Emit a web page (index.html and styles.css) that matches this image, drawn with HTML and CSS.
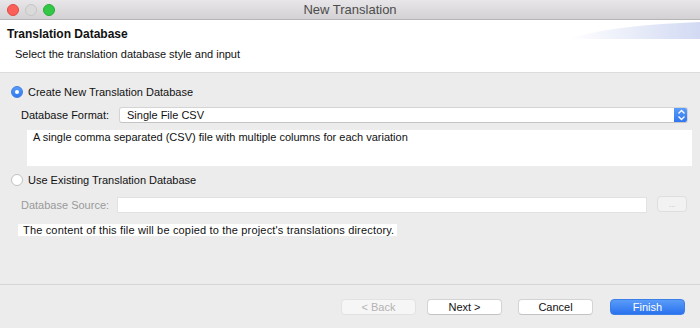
FILE: index.html
```html
<!DOCTYPE html>
<html>
<head>
<meta charset="utf-8">
<title>New Translation</title>
<link rel="stylesheet" href="styles.css">
</head>
<body>
<div class="window">
  <div class="titlebar">
    <div class="lights">
      <span class="light red"></span>
      <span class="light gray"></span>
      <span class="light green"></span>
    </div>
    <div class="wintitle">New Translation</div>
  </div>
  <div class="header">
    <svg class="swoosh" width="132" height="19" viewBox="0 0 132 19">
      <defs>
        <linearGradient id="sw" x1="0" y1="0" x2="1" y2="0">
          <stop offset="0" stop-color="#ffffff"/>
          <stop offset="1" stop-color="#d2daf3"/>
        </linearGradient>
      </defs>
      <path d="M0 18 C 30 8, 80 3, 132 1 L132 18 Z" fill="url(#sw)"/>
    </svg>
    <div class="htitle">Translation Database</div>
    <div class="hsub">Select the translation database style and input</div>
  </div>
  <div class="content">
    <div class="radio-row">
      <span class="radio checked"></span>
      <span>Create New Translation Database</span>
    </div>
    <div class="field-row format-row">
      <span class="flabel flabel-format">Database Format:</span>
      <div class="select">
        <span class="select-text">Single File CSV</span>
        <span class="stepper">
          <svg width="9" height="12" viewBox="0 0 9 12">
            <path d="M1.5 4.5 L4.5 1.5 L7.5 4.5 M1.5 7.5 L4.5 10.5 L7.5 7.5" fill="none" stroke="#fff" stroke-width="1.3"/>
          </svg>
        </span>
      </div>
    </div>
    <div class="desc">A single comma separated (CSV) file with multiple columns for each variation</div>
    <div class="radio-row radio-row2">
      <span class="radio"></span>
      <span>Use Existing Translation Database</span>
    </div>
    <div class="field-row source-row">
      <span class="flabel flabel-source disabled">Database Source:</span>
      <div class="input"></div>
      <div class="browse">...</div>
    </div>
    <div class="info-wrap"><span class="info">The content of this file will be copied to the project's translations directory.</span></div>
  </div>
  <div class="footer">
    <div class="btn btn-disabled">&lt; Back</div>
    <div class="btn btn-next">Next &gt;</div>
    <div class="btn btn-cancel">Cancel</div>
    <div class="btn btn-primary">Finish</div>
  </div>
</div>
</body>
</html>
```
FILE: styles.css
```css
* { box-sizing: border-box; }
html, body { margin: 0; padding: 0; }
body {
  font-family: "Liberation Sans", Arial, sans-serif;
  font-size: 11px;
  color: #111111;
  background: #ececec;
}
.window {
  width: 700px;
  height: 328px;
  display: flex;
  flex-direction: column;
  background: #ececec;
  overflow: hidden;
}
.titlebar {
  height: 20px;
  flex: none;
  display: flex;
  align-items: center;
  justify-content: center;
  position: relative;
  background: linear-gradient(#e8e6e8, #d3d1d3);
  border-bottom: 1px solid #b5b5b5;
}
.lights {
  position: absolute;
  left: 7px;
  top: 4px;
  display: flex;
  gap: 6px;
}
.light {
  width: 12px;
  height: 12px;
  border-radius: 50%;
  display: block;
}
.red { background: #fc5f57; border: 0.5px solid #de4a43; }
.gray { background: #dadada; border: 0.5px solid #c6c6c6; }
.green { background: #33c748; border: 0.5px solid #27aa35; }
.wintitle {
  font-size: 13px;
  color: #4c4c4c;
  line-height: 16px;
}
.header {
  height: 53px;
  flex: none;
  background: #ffffff;
  border-bottom: 1px solid #dcdcdc;
  padding: 7px 7px 0 7px;
  position: relative;
}
.swoosh {
  position: absolute;
  right: 0;
  top: 1px;
}
.htitle {
  font-weight: bold;
  font-size: 12px;
  line-height: 14px;
  color: #111111;
}
.hsub {
  margin-top: 6px;
  margin-left: 8px;
  line-height: 14px;
}
.content {
  flex: 1;
  padding: 11px 0 0 11px;
  display: flex;
  flex-direction: column;
}
.radio-row {
  display: flex;
  align-items: center;
  gap: 5px;
  height: 16px;
  line-height: 16px;
}
.radio {
  width: 12px;
  height: 12px;
  border-radius: 50%;
  background: #ffffff;
  border: 1px solid #c2c2c2;
  display: flex;
  align-items: center;
  justify-content: center;
  flex: none;
}
.radio.checked {
  background: linear-gradient(#5a9cf8, #2d79f2);
  border-color: #3b7fe6;
}
.radio.checked::after {
  content: "";
  width: 4px;
  height: 4px;
  border-radius: 50%;
  background: #ffffff;
}
.field-row {
  display: flex;
  align-items: center;
  padding-left: 10px;
}
.format-row {
  margin-top: 7px;
  height: 16px;
  padding-right: 12px;
}
.flabel { flex: none; line-height: 16px; }
.flabel-format { width: 98px; }
.flabel-source { width: 96px; }
.disabled { color: #9a9a9a; }
.select {
  flex: 1;
  height: 16px;
  background: #ffffff;
  border: 1px solid #d4d4d4;
  border-bottom-color: #c4c4c4;
  border-radius: 3px;
  display: flex;
  align-items: center;
  overflow: hidden;
}
.select-text {
  flex: 1;
  padding-left: 7px;
  line-height: 14px;
}
.stepper {
  width: 14px;
  height: 16px;
  margin: -1px -1px -1px 0;
  background: linear-gradient(#5d9ff9, #2c74f0);
  border-radius: 0 3px 3px 0;
  display: flex;
  align-items: center;
  justify-content: center;
}
.desc {
  margin-top: 7px;
  margin-left: 16px;
  margin-right: 8px;
  height: 36px;
  background: #ffffff;
  padding: 1px 6px;
  line-height: 13px;
}
.radio-row2 { margin-top: 6px; }
.source-row {
  margin-top: 9px;
  height: 16px;
  padding-right: 13px;
}
.input {
  flex: 1;
  height: 16px;
  background: #ffffff;
  border: 1px solid #e2e2e2;
}
.browse {
  width: 30px;
  height: 16px;
  margin-left: 10px;
  margin-bottom: 3px;
  background: #f2f2f2;
  border: 1px solid #dedede;
  border-radius: 4px;
  color: #bdbdbd;
  font-size: 8px;
  text-align: center;
  line-height: 16px;
}
.info-wrap {
  margin-top: 11px;
  margin-left: 7px;
  line-height: 12px;
}
.info {
  background: #ffffff;
  padding: 0 3px 0 5px;
  display: inline-block;
  letter-spacing: 0.17px;
}
.footer {
  height: 44px;
  flex: none;
  border-top: 1px solid #d6d6d6;
  display: flex;
  justify-content: flex-end;
  padding: 14px 15px 0 0;
}
.btn {
  width: 75px;
  height: 16px;
  border-radius: 4px;
  background: #ffffff;
  border: 1px solid #d3d3d3;
  border-bottom-color: #c3c3c3;
  text-align: center;
  line-height: 14px;
  color: #111111;
}
.btn-disabled {
  background: #f6f6f6;
  border-color: #e2e2e2;
  color: #b3b3b3;
}
.btn-next { margin-left: 11px; }
.btn-cancel { margin-left: 16px; }
.btn-primary {
  margin-left: 17px;
  background: linear-gradient(#5a9cf8, #2a72ef);
  border-color: #3a7ee8;
  color: #ffffff;
}
```
